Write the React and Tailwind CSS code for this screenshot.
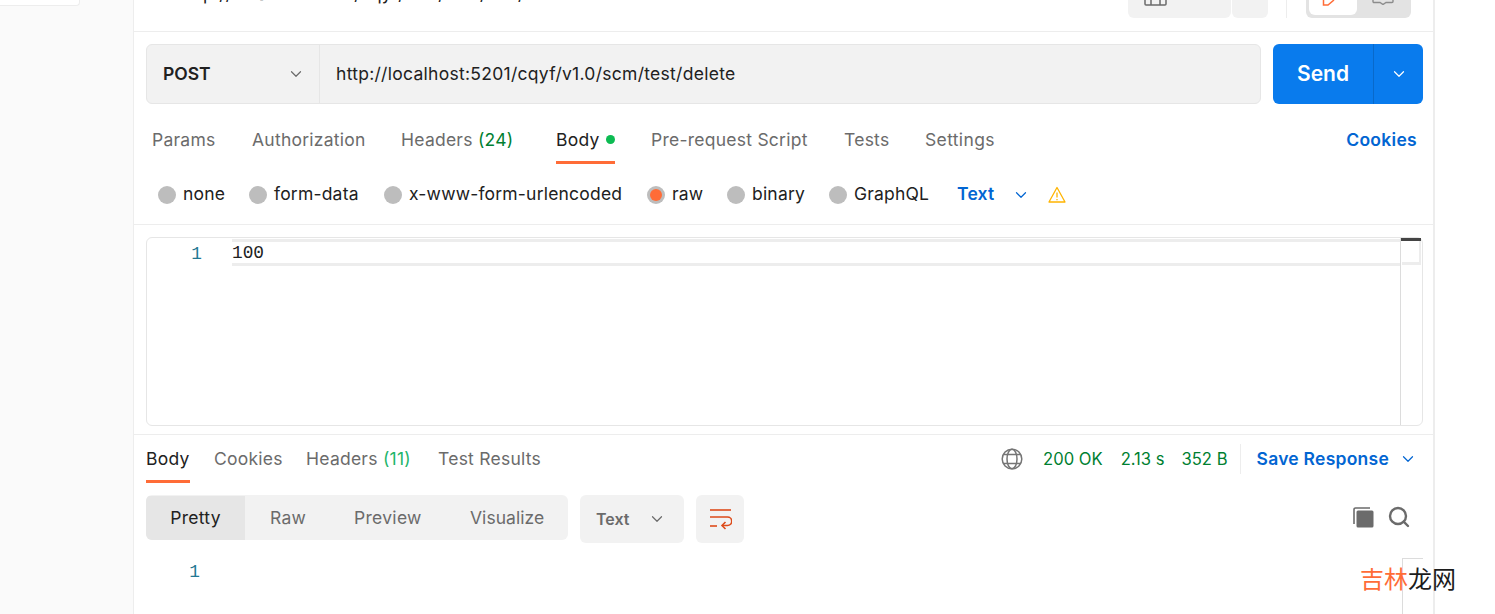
import { ChevronDown, Search } from "lucide-react";

const requestTabs = [
  { label: "Params", width: "w-[100px]" },
  { label: "Authorization", width: "w-[149px]" },
  { label: "Headers", count: "(24)", width: "w-[155px]" },
];

const bodyTypes = [
  { label: "none", width: "w-[91px]" },
  { label: "form-data", width: "w-[135px]" },
  { label: "x-www-form-urlencoded", width: "w-[263px]" },
  { label: "raw", width: "w-[80px]", active: true },
  { label: "binary", width: "w-[102px]" },
  { label: "GraphQL", width: "w-[128px]" },
];

const Radio = ({ active }) => (
  <span className="flex h-[18px] w-[18px] items-center justify-center rounded-full bg-[#bdbdbd]">
    {active && <span className="h-3 w-3 rounded-full bg-[#ff6c37]" />}
  </span>
);

const WrapIcon = () => (
  <svg width="24" height="24" viewBox="0 0 24 24" fill="none" stroke="#dd4b1a" strokeWidth="1.6">
    <path d="M2 3h21" />
    <path d="M2 10h17.5a4.2 4.2 0 0 1 0 8.5H14" />
    <path d="M17.5 15 14 18.5l3.5 3.5" />
    <path d="M2 19h7" />
  </svg>
);

const CopyIcon = () => (
  <svg width="24" height="24" viewBox="0 0 24 24" fill="none">
    <path d="M3 19V4.5A1.5 1.5 0 0 1 4.5 3H19" stroke="#6b6b6b" strokeWidth="1.6" />
    <rect x="5.5" y="5.5" width="17" height="17" rx="1.5" fill="#6b6b6b" />
  </svg>
);

const GlobeIcon = () => (
  <svg width="22" height="22" viewBox="0 0 22 22" fill="none" stroke="#757575" strokeWidth="1.5">
    <circle cx="11" cy="11" r="9.8" />
    <ellipse cx="11" cy="11" rx="5" ry="9.8" />
    <path d="M2.5 6.5h17M2.5 15.5h17" />
  </svg>
);

const WarningIcon = () => (
  <svg width="18" height="18" viewBox="0 0 18 18" fill="none" stroke="#ffb400" strokeWidth="1.3">
    <path d="M9 1.5 17 16H1Z" strokeLinejoin="round" />
    <path d="M9 6.5v5M9 13v1.2" />
  </svg>
);

const SaveIcon = () => (
  <svg width="23" height="6" viewBox="0 0 23 6" fill="none" stroke="#6b6b6b" strokeWidth="1.5">
    <path d="M1 0v4a1 1 0 0 0 1 1h19a1 1 0 0 0 1-1V0M7 0v5M16 0v5" />
  </svg>
);

const PenIcon = () => (
  <svg width="14" height="6" viewBox="0 0 14 6" fill="none" stroke="#ff6c37" strokeWidth="1.5">
    <path d="M1.5 0v5h4.5L12 0" />
  </svg>
);

const CommentIcon = () => (
  <svg width="22" height="5" viewBox="0 0 22 5" fill="none" stroke="#8c8c8c" strokeWidth="1.4">
    <path d="M1 0v1.5a1 1 0 0 0 1 1h6l3 2 3-2h6a1 1 0 0 0 1-1V0" />
  </svg>
);

const App = () => {
  return (
    <div className="relative flex h-[614px] w-[1495px] overflow-hidden bg-white font-['Inter',sans-serif] text-[17.5px] text-[#212121]">
      <aside className="h-full w-[134px] shrink-0 border-r border-[#ededed] bg-[#fafafa]">
        <div className="h-[6px] w-[80px] rounded-br border-b border-r border-[#ededed] bg-white" />
      </aside>

      <main className="h-full w-[1301px] shrink-0 border-r-2 border-[#ededed]">
        {/* header row, cut off by the top of the window */}
        <div className="flex h-[32px] border-b border-[#ededed] pr-[22px]">
          <div className="ml-[47px] -mt-[19px] h-[23px] overflow-hidden tracking-[0.2px]">
            http://localhost:5201/cqyf/v1.0/scm/test/delete
          </div>
          <div className="ml-auto flex h-[18px] items-start">
            <div className="h-[18px] w-[103px] rounded-b-md bg-[#f2f2f2] pl-[16px]">
              <SaveIcon />
            </div>
            <div className="ml-px h-[18px] w-[36px] rounded-b-md bg-[#f2f2f2]" />
            <div className="ml-[18px] h-[18px] w-px bg-[#ededed]" />
            <div className="ml-[19px] flex h-[18px] w-[105px] rounded-b-md bg-[#e3e3e3] pb-[3px] pl-[3px]">
              <div className="h-[15px] w-[48px] rounded-b-md bg-white pl-[13px]">
                <PenIcon />
              </div>
              <div className="pl-[15px]">
                <CommentIcon />
              </div>
            </div>
          </div>
        </div>

        {/* url bar */}
        <div className="flex pl-3 pr-[10px] pt-3">
          <div className="flex h-[60px] w-[1115px] overflow-hidden rounded-md border border-[#e6e6e6] bg-[#f2f2f2]">
            <div className="flex w-[173px] items-center justify-between border-r border-[#e6e6e6] pl-4 pr-[14px] font-semibold">
              POST
              <ChevronDown size={18} strokeWidth={1.6} className="text-[#6b6b6b]" />
            </div>
            <div className="flex items-center pl-4 tracking-[0.28px]">http://localhost:5201/cqyf/v1.0/scm/test/delete</div>
          </div>
          <div className="ml-3 flex h-[60px] w-[150px] overflow-hidden rounded-md bg-[#097bed] text-white">
            <div className="flex w-[100px] items-center justify-center text-[21px] font-semibold">Send</div>
            <div className="flex w-[50px] items-center justify-center border-l border-[#0869ca]">
              <ChevronDown size={18} strokeWidth={1.6} />
            </div>
          </div>
        </div>

        {/* request tabs */}
        <div className="flex h-[60px] items-center pl-[18px] pr-[16px] pt-[12px] tracking-[0.25px] text-[#6b6b6b]">
          {requestTabs.map((tab) => (
            <div key={tab.label} className={tab.width}>
              {tab.label} {tab.count && <span className="text-[#007f31]">{tab.count}</span>}
            </div>
          ))}
          <div className="relative flex h-[48px] w-[95px] items-center text-[#212121]">
            Body
            <span className="ml-[6px] mb-[2px] h-[9px] w-[9px] rounded-full bg-[#0cbb52]" />
            <span className="absolute bottom-0 left-0 h-[3px] w-[59px] bg-[#ff6c37]" />
          </div>
          <div className="w-[193px]">Pre-request Script</div>
          <div className="w-[81px]">Tests</div>
          <div className="tracking-[0.35px]">Settings</div>
          <div className="ml-auto font-semibold tracking-[0.3px] text-[#0265d2]">Cookies</div>
        </div>

        {/* body type */}
        <div className="flex h-[61px] items-center border-b border-[#ededed] pl-[24px] pt-[1px]">
          {bodyTypes.map((type) => (
            <div key={type.label} className={`flex items-center gap-[7px] ${type.width}`}>
              <Radio active={type.active} />
              <span className="tracking-[0.2px]">{type.label}</span>
            </div>
          ))}
          <span className="font-semibold tracking-[0.2px] text-[#0265d2]">Text</span>
          <ChevronDown size={18} strokeWidth={1.6} className="ml-[18px] text-[#0265d2]" />
          <span className="ml-[18px]"><WarningIcon /></span>
        </div>

        {/* editor */}
        <div className="pl-3 pr-[10px] pt-3">
          <div className="flex h-[189px] w-[1277px] rounded-md border border-[#e6e6e6]">
            <div className="w-[55px] shrink-0 pt-[3px] text-right font-['Liberation_Mono',monospace] text-[17.8px] text-[#237893]">1</div>
            <div className="ml-[30px] mt-px h-[27px] w-[1169px] border-y-[3px] border-[#ededed] font-['Liberation_Mono',monospace] text-[17.8px] leading-[23px] text-[#212121]">
              100
            </div>
            <div className="w-[22px] shrink-0 border-l border-[#dcdcdc]">
              <div className="h-[3px] w-[20px] bg-[#444]" />
              <div className="ml-px h-[24px] w-[19px] border-r-[2px] border-b-[3px] border-[#ededed]" />
            </div>
          </div>
        </div>

        {/* response tabs */}
        <div className="mt-2 flex h-[49px] items-center border-t border-[#ededed] pl-3 pr-4 tracking-[0.25px] text-[#6b6b6b]">
          <div className="relative flex h-[48px] w-[68px] items-center text-[#212121]">
            Body
            <span className="absolute bottom-0 left-0 h-[3px] w-[44px] bg-[#ff6c37]" />
          </div>
          <div className="w-[92px]">Cookies</div>
          <div className="w-[132px]">Headers <span className="text-[#1fb56b]">(11)</span></div>
          <div>Test Results</div>

          <div className="ml-auto flex items-center text-[16.6px] tracking-normal text-[#007f31]">
            <span className="mr-[20px]"><GlobeIcon /></span>
            <span className="mr-[18px]">200 OK</span>
            <span className="mr-[17px]">2.13 s</span>
            <span>352 B</span>
            <span className="ml-3 mr-4 h-[30px] w-px bg-[#ededed]" />
            <span className="text-[17.5px] font-semibold tracking-[0.25px] text-[#0265d2]">Save Response</span>
            <ChevronDown size={18} strokeWidth={1.6} className="ml-[10px] text-[#0265d2]" />
          </div>
        </div>

        {/* response toolbar */}
        <div className="mt-3 flex items-start pl-3 pr-[22px]">
          <div className="flex h-[45px] w-[422px] items-center overflow-hidden rounded-md bg-[#f2f2f2] pt-px tracking-[0.3px] text-[#6b6b6b]">
            <div className="flex h-[45px] w-[99px] items-center justify-center bg-[#e6e6e6] text-[#212121]">Pretty</div>
            <div className="w-[85px] pl-[25px]">Raw</div>
            <div className="w-[116px] pl-[24px]">Preview</div>
            <div className="pl-[24px] tracking-[0.05px]">Visualize</div>
          </div>
          <div className="ml-3 flex h-[48px] w-[104px] items-center justify-between rounded-md bg-[#f2f2f2] pl-4 pr-[18px] text-[16px] font-semibold text-[#6b6b6b]">
            Text
            <ChevronDown size={18} strokeWidth={1.6} />
          </div>
          <div className="ml-3 flex h-[48px] w-[48px] items-center justify-center rounded-md bg-[#f2f2f2]">
            <WrapIcon />
          </div>
          <div className="ml-auto flex items-center gap-[12px] pt-[10px] text-[#6b6b6b]">
            <CopyIcon />
            <Search size={24} strokeWidth={2.4} />
          </div>
        </div>

        {/* response body */}
        <div className="flex pl-3 pt-[15px]">
          <div className="w-[54px] pt-[2px] text-right font-['Liberation_Mono',monospace] text-[17.8px] leading-[24px] text-[#237893]">1</div>
          <div className="ml-auto mr-[10px] h-[60px] w-[21px] border-l border-t border-[#dcdcdc]" />
        </div>
      </main>

      {/* site watermark */}
      <div className="absolute left-[1360px] top-[562px] font-['Noto_Sans_CJK_SC',sans-serif] text-[24px] leading-[32px] text-[#1c1c1c]">
        <span className="text-[#ff6c37]">吉林</span>龙网
      </div>
    </div>
  );
};

export default App;
